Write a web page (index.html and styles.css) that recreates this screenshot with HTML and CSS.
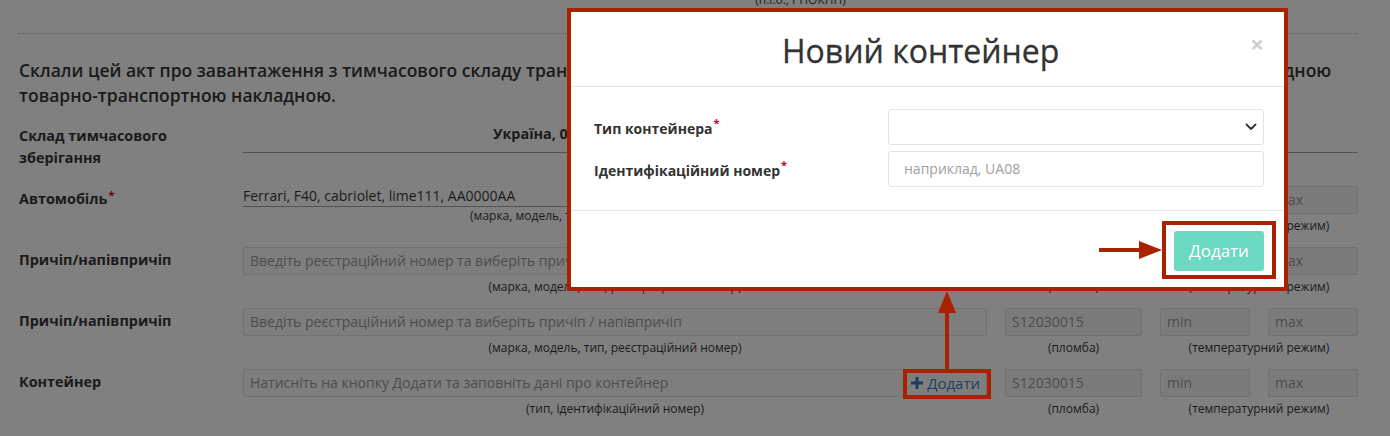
FILE: index.html
```html
<!DOCTYPE html>
<html lang="uk">
<head>
<meta charset="utf-8">
<title>Новий контейнер</title>
<link rel="stylesheet" href="styles.css">
</head>
<body>
<div class="page">
  <div class="top-row">
    <div class="caption top-caption">(п.і.б., РНОКПП)</div>
  </div>
  <hr class="dots">
  <p class="intro">Склали цей акт про завантаження з тимчасового складу транспортного засобу товарами, що переміщуються під митним контролем міжнародною товарно-транспортною накладною.</p>

  <div class="form">
    <div class="frow frow-first">
      <div class="flabel">Склад тимчасового<br>зберігання</div>
      <div class="warehouse">Україна, 01001, м. Київ, вул. Хрещатик, 22, ТОВ «Митний склад», ліцензія № 12345</div>
    </div>

    <div class="frow">
      <div class="flabel">Автомобіль<sup class="req">*</sup></div>
      <div class="cell">
        <div class="static">Ferrari, F40, cabriolet, lime111, AA0000AA</div>
        <div class="caption">(марка, модель, тип, колір, реєстраційний номер)</div>
      </div>
      <div class="cell">
        <div class="box box-grey">S12030015</div>
        <div class="caption">(пломба)</div>
      </div>
      <div class="cell">
        <div class="pair"><div class="box box-grey">min</div><div class="box box-grey">max</div></div>
        <div class="caption">(температурний режим)</div>
      </div>
    </div>

    <div class="frow">
      <div class="flabel">Причіп/напівпричіп</div>
      <div class="cell">
        <div class="box">Введіть реєстраційний номер та виберіть причіп / напівпричіп</div>
        <div class="caption">(марка, модель, тип, реєстраційний номер)</div>
      </div>
      <div class="cell">
        <div class="box box-grey">S12030015</div>
        <div class="caption">(пломба)</div>
      </div>
      <div class="cell">
        <div class="pair"><div class="box box-grey">min</div><div class="box box-grey">max</div></div>
        <div class="caption">(температурний режим)</div>
      </div>
    </div>

    <div class="frow">
      <div class="flabel">Причіп/напівпричіп</div>
      <div class="cell">
        <div class="box">Введіть реєстраційний номер та виберіть причіп / напівпричіп</div>
        <div class="caption">(марка, модель, тип, реєстраційний номер)</div>
      </div>
      <div class="cell">
        <div class="box box-grey">S12030015</div>
        <div class="caption">(пломба)</div>
      </div>
      <div class="cell">
        <div class="pair"><div class="box box-grey">min</div><div class="box box-grey">max</div></div>
        <div class="caption">(температурний режим)</div>
      </div>
    </div>

    <div class="frow">
      <div class="flabel">Контейнер</div>
      <div class="cell">
        <div class="box box-container">
          <span class="ph">Натисніть на кнопку Додати та заповніть дані про контейнер</span>
          <span class="add-link"><svg class="plus" viewBox="0 0 12 12" width="12" height="12"><path d="M4.5 0h3v4.5H12v3H7.5V12h-3V7.5H0v-3h4.5z" fill="currentColor"/></svg>Додати</span>
        </div>
        <div class="caption">(тип, ідентифікаційний номер)</div>
      </div>
      <div class="cell">
        <div class="box box-grey">S12030015</div>
        <div class="caption">(пломба)</div>
      </div>
      <div class="cell">
        <div class="pair"><div class="box box-grey">min</div><div class="box box-grey">max</div></div>
        <div class="caption">(температурний режим)</div>
      </div>
    </div>
  </div>
</div>

<div class="anno-add"></div>

<div class="modal">
  <div class="modal-header">
    <h2 class="modal-title">Новий контейнер</h2>
    <span class="close">×</span>
  </div>
  <div class="modal-body">
    <div class="mrow">
      <div class="mlabel">Тип контейнера<sup class="req-m">*</sup></div>
      <div class="mselect">
        <svg class="chev" viewBox="0 0 12 8" width="12" height="8"><path d="M1.5 1.5L6 6l4.5-4.5" fill="none" stroke="#333" stroke-width="1.8" stroke-linecap="round" stroke-linejoin="round"/></svg>
      </div>
    </div>
    <div class="mrow">
      <div class="mlabel">Ідентифікаційний номер<sup class="req-m">*</sup></div>
      <div class="minput">наприклад, UA08</div>
    </div>
  </div>
  <div class="modal-footer">
    <div class="btn-zone">
      <span class="arrow-h"></span>
      <span class="btn-frame"><span class="btn-add">Додати</span></span>
    </div>
  </div>
</div>

<div class="arrow-v"></div>
</body>
</html>
```

FILE: styles.css
```css
* { box-sizing: border-box; }
html, body { margin: 0; padding: 0; }
html { background: #808080; }
body {
  font-family: "Open Sans", "Liberation Sans", sans-serif;
  color: #1a1a1a;
  background: #808080;
  width: 1390px;
  height: 436px;
  overflow: hidden;
  position: relative;
}
.page {
  padding: 0 32px 0 19px;
  height: 460px;
  background-color: #808080;
  box-shadow: inset 0 0 0 1000px #808080;
}
.top-row {
  display: grid;
  grid-template-columns: 224px 1fr;
  padding-top: 1px;
  margin-top: -10px;
}
.top-caption { grid-column: 2; }
.caption {
  font-size: 12px;
  line-height: 17px;
  text-align: center;
  color: #1a1a1a;
  white-space: nowrap;
}
.dots {
  border: 0;
  border-top: 1px dotted #5e5e5e;
  margin: 25px 0 0 -1px;
  height: 0;
}
.intro {
  font-size: 17.5px;
  font-weight: 600;
  line-height: 25px;
  margin: 24px 0 0 0;
  color: #1a1a1a;
}
.form {
  margin-top: 15px;
  display: flex;
  flex-direction: column;
  gap: 13px;
}
.frow {
  display: grid;
  grid-template-columns: 206px 744px 137px 198px;
  column-gap: 18px;
  align-items: start;
}
.frow-first { margin-bottom: 4px; }
.flabel {
  font-size: 14.4px;
  font-weight: 700;
  line-height: 22px;
  margin-top: 2px;
  color: #1a1a1a;
}
.req {
  color: #68010e;
  font-size: 11px;
  vertical-align: top;
  position: relative;
  top: -4px;
  margin-left: 1px;
}
.warehouse {
  grid-column: 2 / 5;
  font-size: 14.4px;
  font-weight: 700;
  line-height: 22px;
  text-align: center;
  padding-bottom: 7px;
  border-bottom: 1px solid #535353;
  white-space: nowrap;
  overflow: hidden;
}
.static {
  font-size: 14px;
  line-height: 20px;
  border-bottom: 1px solid #535353;
  color: #1a1a1a;
}
.box {
  height: 28px;
  border: 1px solid #717171;
  background-color: #7e7e7e;
  box-shadow: inset 0 0 0 40px #7e7e7e;
  border-radius: 2px;
  font-size: 14px;
  line-height: 26px;
  color: #4d4d4d;
  padding: 0 6px;
  margin-bottom: 3px;
  white-space: nowrap;
  overflow: hidden;
}
.box-grey {
  background-color: #7b7b7b;
  box-shadow: inset 0 0 0 40px #7b7b7b;
}
.pair {
  display: grid;
  grid-template-columns: 90px 90px;
  column-gap: 18px;
}
.box-container {
  display: flex;
  align-items: center;
  justify-content: space-between;
  overflow: visible;
  padding-right: 0;
}
.add-link {
  display: flex;
  align-items: center;
  gap: 4px;
  height: 26px;
  padding: 0 6px 0 0;
  color: #1d3e60;
  font-size: 15px;
}
.plus { display: block; }

.anno-add {
  position: absolute;
  left: 903px;
  top: 369px;
  width: 88px;
  height: 30px;
  border: 4px solid #a82200;
  z-index: 30;
}

.modal {
  position: absolute;
  left: 567px;
  top: 8px;
  width: 721px;
  height: 283px;
  background: #fff;
  border: 4px solid #a82200;
  z-index: 20;
  display: flex;
  flex-direction: column;
  color: #333;
}
.modal-header {
  display: flex;
  align-items: flex-start;
  padding: 21px 20px 18px 20px;
  border-bottom: 1px solid #e5e5e5;
}
.modal-title {
  flex: 1;
  margin: 0;
  text-align: center;
  font-size: 32px;
  font-weight: 400;
  line-height: 35px;
  color: #333;
  -webkit-text-stroke: 0.3px #333;
}
.close {
  font-size: 24px;
  font-weight: 700;
  line-height: 1;
  color: #cfcfcf;
  margin-top: -1px;
}
.modal-body {
  padding: 22px 20px 23px 23px;
  display: flex;
  flex-direction: column;
  gap: 6px;
  border-bottom: 1px solid #e5e5e5;
}
.mrow {
  display: grid;
  grid-template-columns: 294px 376px;
  align-items: center;
}
.mlabel {
  font-size: 14px;
  font-weight: 700;
  color: #333;
  padding-top: 2px;
}
.req-m {
  color: #d0021b;
  font-size: 11px;
  vertical-align: top;
  position: relative;
  top: -4px;
  margin-left: 1px;
}
.mselect, .minput {
  height: 36px;
  border: 1px solid #e3e3e3;
  border-radius: 3px;
  background: #fff;
}
.mselect {
  display: flex;
  align-items: center;
  justify-content: flex-end;
  padding-right: 6px;
}
.chev { display: block; }
.minput {
  font-size: 14px;
  line-height: 34px;
  color: #a0a0a0;
  padding-left: 15px;
}
.modal-footer {
  flex: 1;
  display: flex;
  justify-content: flex-end;
  align-items: flex-start;
  padding: 10px 8px 0 0;
}
.btn-zone {
  display: flex;
  align-items: center;
}
.btn-frame {
  border: 4px solid #a82200;
  padding: 6px 8px 4px 8px;
  display: block;
}
.btn-add {
  display: block;
  width: 90px;
  height: 40px;
  line-height: 40px;
  text-align: center;
  background: #6cd9c3;
  border-radius: 3px;
  color: #fff;
  font-size: 17px;
}
.arrow-h {
  position: relative;
  width: 63px;
  height: 18px;
  display: block;
}
.arrow-h::before {
  content: "";
  position: absolute;
  left: 0;
  top: 7px;
  width: 42px;
  height: 4px;
  background: #a82200;
}
.arrow-h::after {
  content: "";
  position: absolute;
  right: 0;
  top: 0;
  border-left: 23px solid #a82200;
  border-top: 9px solid transparent;
  border-bottom: 9px solid transparent;
}
.arrow-v {
  position: absolute;
  left: 938px;
  top: 291px;
  width: 18px;
  height: 79px;
  z-index: 30;
}
.arrow-v::before {
  content: "";
  position: absolute;
  left: 0;
  top: 0;
  border-bottom: 22px solid #a82200;
  border-left: 9px solid transparent;
  border-right: 9px solid transparent;
}
.arrow-v::after {
  content: "";
  position: absolute;
  left: 7px;
  top: 21px;
  width: 4px;
  height: 58px;
  background: #a82200;
}
```
